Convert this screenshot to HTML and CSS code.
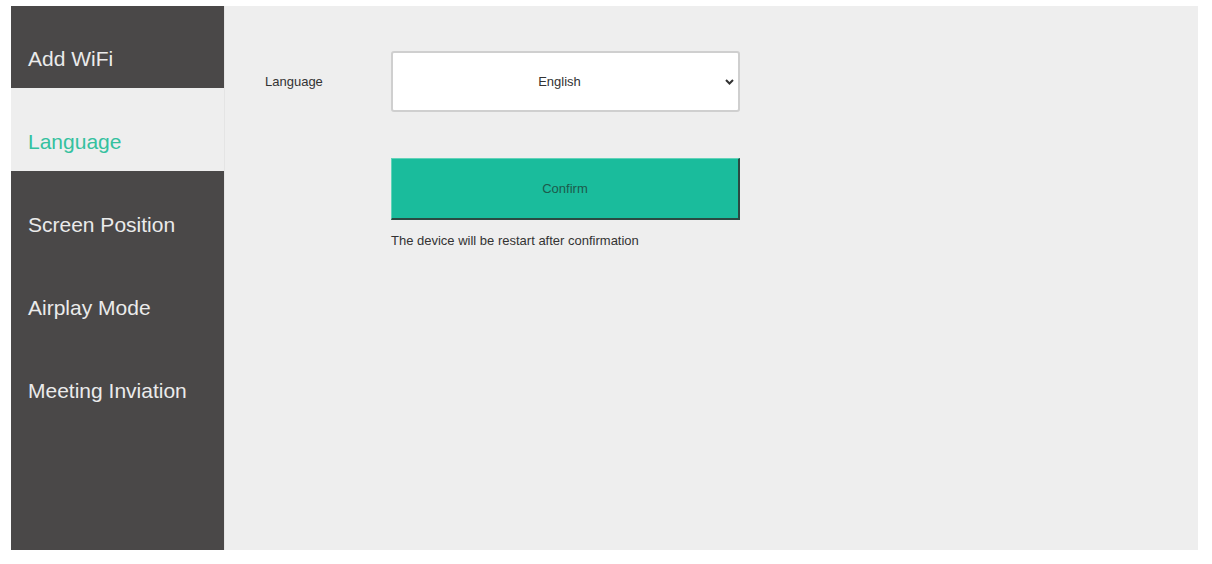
FILE: index.html
```html
<!DOCTYPE html>
<html lang="en">
<head>
<meta charset="utf-8">
<title>Settings</title>
<link rel="stylesheet" href="styles.css">
</head>
<body>
<div class="panel">
  <nav class="sidebar">
    <div class="nav-item first">Add WiFi</div>
    <div class="nav-item active">Language</div>
    <div class="nav-item">Screen Position</div>
    <div class="nav-item">Airplay Mode</div>
    <div class="nav-item">Meeting Inviation</div>
  </nav>
  <main class="content">
    <div class="row">
      <label class="label" for="lang">Language</label>
      <div class="select-wrap">
        <select id="lang" class="select">
          <option>English</option>
        </select>
        <svg class="chevron" width="9" height="6" viewBox="0 0 9 6"><path d="M1 1 L4.5 4.5 L8 1" fill="none" stroke="#333" stroke-width="2"/></svg>
      </div>
    </div>
    <div class="actions">
      <button class="confirm">Confirm</button>
      <p class="note">The device will be restart after confirmation</p>
    </div>
  </main>
</div>
</body>
</html>
```

FILE: styles.css
```css
html, body {
  margin: 0;
  background: #ffffff;
}
body {
  padding: 6px 14px 0 11px;
  font-family: "Liberation Sans", Arial, sans-serif;
}
.panel {
  display: flex;
  height: 544px;
  background: #eeeeee;
}
.sidebar {
  width: 213px;
  flex: none;
  background: #4a4848;
  display: flex;
  flex-direction: column;
  box-shadow: 1px 0 0 #e4e4e4;
}
.nav-item {
  height: 83px;
  flex: none;
  padding: 40px 0 0 17px;
  box-sizing: border-box;
  font-size: 21px;
  line-height: 28px;
  color: #ebebeb;
}
.nav-item.first {
  height: 82px;
  padding-top: 39px;
}
.nav-item.active {
  background: #eeeeee;
  color: #35c19f;
}
.content {
  flex: 1;
  padding: 45px 0 0 41px;
}
.row {
  display: flex;
  align-items: center;
}
.label {
  width: 126px;
  font-size: 13px;
  color: #333333;
}
.select-wrap {
  position: relative;
  width: 349px;
  height: 61px;
}
.select {
  appearance: none;
  -webkit-appearance: none;
  width: 100%;
  height: 100%;
  box-sizing: border-box;
  border: 2px solid #cfcfcf;
  border-radius: 3px;
  background: #ffffff;
  font-family: "Liberation Sans", Arial, sans-serif;
  font-size: 13px;
  color: #333333;
  text-align: center;
  text-align-last: center;
  padding: 0 24px 0 12px;
}
.chevron {
  position: absolute;
  right: 6px;
  top: 28px;
}
.actions {
  margin-left: 126px;
  margin-top: 46px;
}
.confirm {
  display: block;
  width: 349px;
  height: 62px;
  box-sizing: border-box;
  background: #1abc9c;
  border: 1px solid #5fd3b8;
  border-right: 2px solid #2b4a42;
  border-bottom: 2px solid #2b4a42;
  font-family: "Liberation Sans", Arial, sans-serif;
  font-size: 13px;
  color: #1d5a4b;
  padding: 0;
}
.note {
  margin: 13px 0 0;
  font-size: 13px;
  color: #333333;
}
```
